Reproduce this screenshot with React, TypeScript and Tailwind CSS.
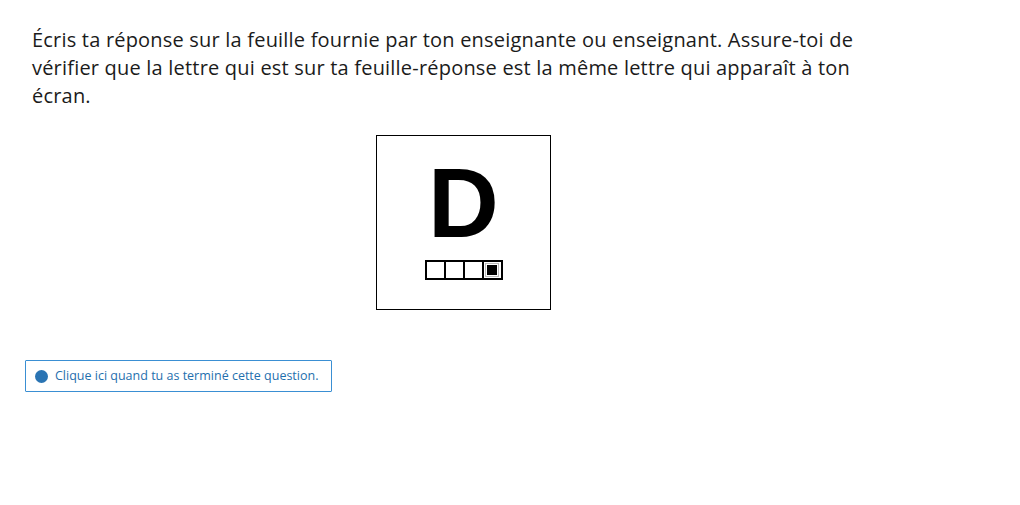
export default function App() {
  return (
    <main className="min-h-screen bg-white text-[#1b1b1b] font-['Open_Sans','Noto_Sans',sans-serif]">
      <div className="w-[863px] pl-[32px] pt-[26px] box-content">
        <p className="text-[20px] leading-[28px] tracking-[0.2px]">
          Écris ta réponse sur la feuille fournie par ton enseignante ou enseignant. Assure-toi de
          <br />
          vérifier que la lettre qui est sur ta feuille-réponse est la même lettre qui apparaît à ton
          <br />
          écran.
        </p>

        <div className="flex justify-center mt-[25px]">
          <div className="w-[175px] h-[175px] border border-black flex flex-col items-center">
            <span className="mt-[18px] text-[98px] leading-[98px] font-bold font-['Liberation_Sans',Arial,sans-serif] text-black">
              D
            </span>
            <div className="mt-[8px] flex border-2 border-black">
              <div className="w-[19px] h-[16px] border-r-2 border-black" />
              <div className="w-[19px] h-[16px] border-r-2 border-black" />
              <div className="w-[19px] h-[16px] border-r-2 border-black" />
              <div className="w-[17px] h-[16px] flex items-center justify-center">
                <div className="w-[14px] h-[14px] border border-[#bbb] p-[1px]">
                  <div className="w-full h-full bg-black" />
                </div>
              </div>
            </div>
          </div>
        </div>
      </div>

      <div className="pl-[25px] mt-[50px]">
        <button className="w-[307px] h-[32px] border border-[#3a8fd3] rounded-[1px] flex items-center pl-[9px] gap-[7px] text-[12.5px] text-[#1f6fae]">
          <span className="w-[13px] h-[13px] rounded-full bg-[#2a74b3]" />
          Clique ici quand tu as terminé cette question.
        </button>
      </div>
    </main>
  )
}
